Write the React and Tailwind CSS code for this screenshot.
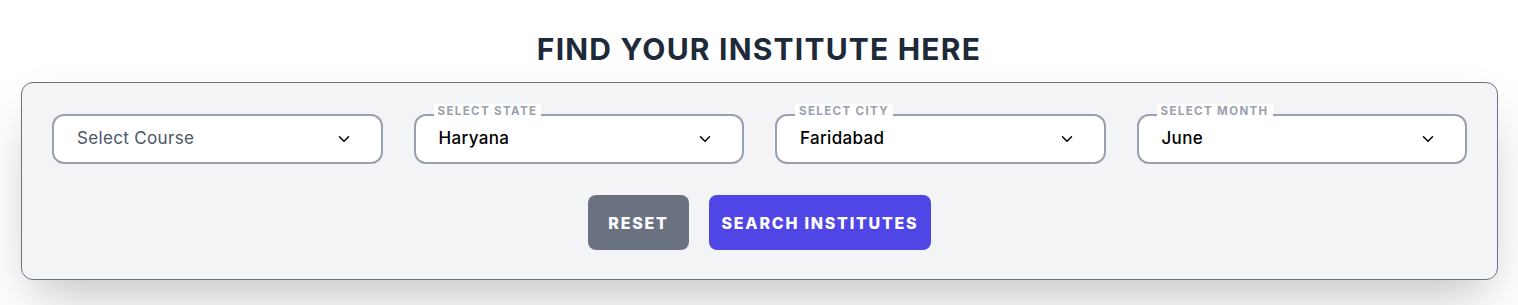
import { ChevronDown } from "lucide-react";

const fields = [
  { label: null, value: "Select Course", placeholder: true },
  { label: "SELECT STATE", value: "Haryana" },
  { label: "SELECT CITY", value: "Faridabad" },
  { label: "SELECT MONTH", value: "June" },
];

function SelectBox({ label, value, placeholder }) {
  return (
    <div className="relative">
      {label && (
        <span className="absolute -top-[10px] left-[20px] bg-white px-[4px] text-[11.5px] font-bold leading-[14px] tracking-[0.12em] text-gray-400">
          {label}
        </span>
      )}
      <div className="flex h-[50px] items-center justify-between rounded-xl border-2 border-gray-400 bg-white pl-[23px] pr-[28px]">
        <span
          className={
            placeholder
              ? "text-[17px] tracking-[0.02em] text-gray-600"
              : "text-[17px] font-medium tracking-[0.02em] text-black"
          }
        >
          {value}
        </span>
        <ChevronDown size={18} strokeWidth={2} className="text-black" />
      </div>
    </div>
  );
}

export default function App() {
  return (
    <div
      className="min-h-[305px] bg-white pt-[31px]"
      style={{ fontFamily: "Inter, 'Noto Sans', sans-serif" }}
    >
      <h2 className="mb-[15px] text-center text-[30px] font-bold leading-[36px] tracking-[0.04em] text-gray-800">
        FIND YOUR INSTITUTE HERE
      </h2>

      <div className="mx-[20px] ml-[21px] rounded-xl border border-gray-500 bg-gray-100 px-[30px] pb-[29px] pt-[31px] shadow-2xl">
        <div className="grid grid-cols-4 gap-[31px]">
          {fields.map((f, i) => (
            <SelectBox key={i} {...f} />
          ))}
        </div>

        <div className="mt-[31px] flex justify-center gap-[20px]">
          <button className="h-[55px] w-[101px] rounded-lg bg-gray-500 text-[16px] font-extrabold tracking-[0.11em] text-white">
            RESET
          </button>
          <button className="h-[55px] w-[222px] rounded-lg bg-[#4f46e5] text-[16px] font-extrabold tracking-[0.11em] text-white">
            SEARCH INSTITUTES
          </button>
        </div>
      </div>
    </div>
  );
}
